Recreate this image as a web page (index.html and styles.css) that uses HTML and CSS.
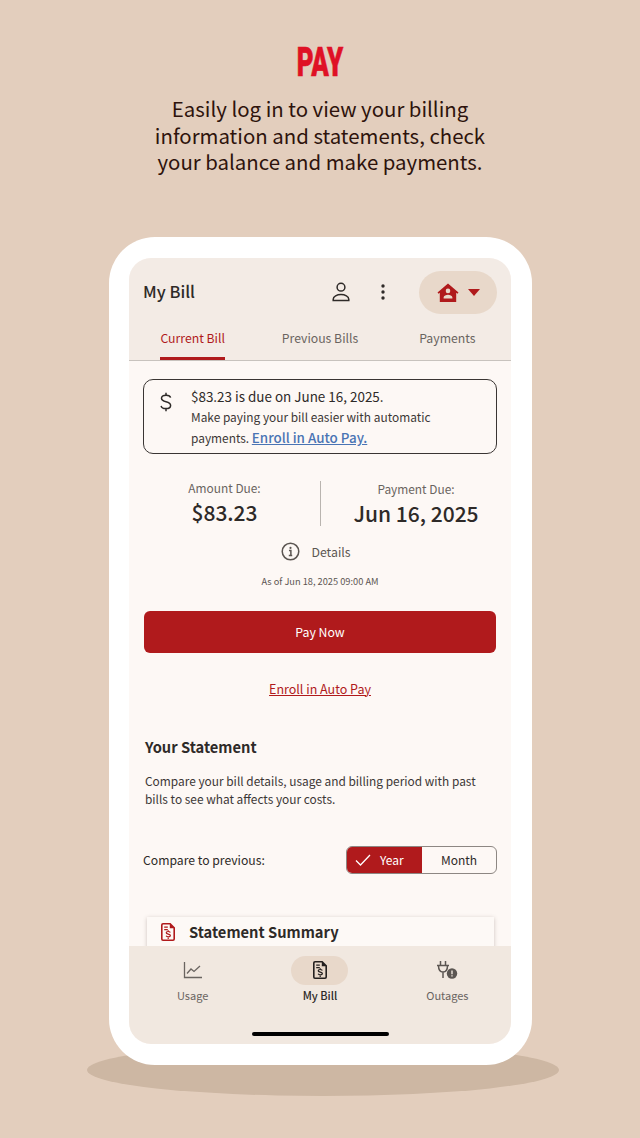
FILE: index.html
```html
<!DOCTYPE html>
<html lang="en">
<head>
    <meta charset="UTF-8">
    <meta name="viewport" content="width=device-width, initial-scale=1.0">
    <title>Pay</title>
    <link rel="stylesheet" href="styles.css">
</head>
<body>
    <div class="page">
        <h1 class="heading"><span>PAY</span></h1>
        <p class="intro">Easily log in to view your billing<br>information and statements, check<br>your balance and make payments.</p>

        <div class="phone-wrap">
            <div class="shadow"></div>
            <div class="phone">
                <div class="screen">
                    <div class="top">
                        <div class="topbar">
                            <div class="title">My Bill</div>
                            <svg class="ico-user" width="24" height="24" viewBox="0 0 24 24" fill="none" stroke="#2e2a28" stroke-width="1.5">
                                <circle cx="12" cy="7.2" r="3.9"/>
                                <path d="M4.2 20.6v-1.4c0-2.9 3.800-4.600 7.800-4.600s7.800 1.700 7.800 4.600v1.400z"/>
                            </svg>
                            <svg class="ico-more" width="6" height="18" viewBox="0 0 6 18" fill="#2e2a28">
                                <circle cx="3" cy="3" r="1.7"/>
                                <circle cx="3" cy="9" r="1.7"/>
                                <circle cx="3" cy="15" r="1.7"/>
                            </svg>
                            <div class="acct">
                                <svg width="22" height="20" viewBox="0 0 22 20">
                                    <path fill="#b01a1c" fill-rule="evenodd" d="M11 .5 21.5 9.6l-1 1.2-1.300-1V19H2.800V9.800l-1.300 1-1-1.200zM11 5.600a2.300 2.300 0 1 0 0 4.600 2.300 2.300 0 0 0 0-4.600zM6.600 15.600h8.800v-1.200c0-1.500-2.600-2.600-4.400-2.600s-4.400 1.100-4.400 2.600z"/>
                                </svg>
                                <span class="caret"></span>
                            </div>
                        </div>
                        <div class="tabs">
                            <div class="tab tab-on"><span>Current Bill</span></div>
                            <div class="tab"><span>Previous Bills</span></div>
                            <div class="tab"><span>Payments</span></div>
                        </div>
                    </div>

                    <div class="main">
                        <div class="notice">
                            <svg class="ico-dollar" width="12" height="20" viewBox="0 0 12 20" fill="none" stroke="#2e2a28" stroke-width="1.500">
                                <path d="M10.600 5.600C10.200 3.900 8.600 3.200 6.200 3.200 3.400 3.200 1.500 4.400 1.500 6.300c0 2.200 2 2.900 4.500 3.500 2.600.7 4.600 1.400 4.600 3.600 0 2-2 3.200-4.700 3.200-2.600 0-4.400-.9-4.800-2.800"/>
                                <path d="M6 .8v2.400M6 16.600V19.200"/>
                            </svg>
                            <div>
                                <div class="notice-head">$83.23 is due on June 16, 2025.</div>
                                <div class="notice-text">Make paying your bill easier with automatic<br>payments. <a class="notice-link">Enroll in Auto Pay.</a></div>
                            </div>
                        </div>

                        <div class="due">
                            <div class="due-col">
                                <div class="due-label">Amount Due:</div>
                                <div class="due-value">$83.23</div>
                            </div>
                            <div class="due-col due-right">
                                <div class="due-label">Payment Due:</div>
                                <div class="due-value">Jun 16, 2025</div>
                            </div>
                        </div>

                        <div class="details">
                            <svg width="19" height="19" viewBox="0 0 20 20" fill="none" stroke="#5c5652" stroke-width="1.6">
                                <circle cx="10" cy="10" r="8.700"/>
                                <circle cx="10" cy="6.200" r="1.100" fill="#5c5652" stroke="none"/>
                                <path d="M8.400 9h2v5M8.200 14.200h3.600"/>
                            </svg>
                            <span>Details</span>
                        </div>
                        <div class="asof">As of Jun 18, 2025 09:00 AM</div>

                        <div class="pay-btn">Pay Now</div>
                        <a class="auto-link">Enroll in Auto Pay</a>

                        <h2 class="st-title">Your Statement</h2>
                        <p class="st-text">Compare your bill details, usage and billing period with past<br>bills to see what affects your costs.</p>

                        <div class="compare">
                            <div class="compare-label">Compare to previous:</div>
                            <div class="toggle">
                                <div class="toggle-on">
                                    <svg width="16" height="12" viewBox="0 0 16 12" fill="none" stroke="#fff" stroke-width="1.300">
                                        <path d="M1 6.500 5.500 11 15 1"/>
                                    </svg>
                                    Year
                                </div>
                                <div class="toggle-off">Month</div>
                            </div>
                        </div>

                        <div class="card">
                            <svg class="card-ico" width="14" height="18" viewBox="0 0 14 18">
                                <path fill="#b01a1c" fill-rule="evenodd" d="M2 0h7.500L14 4.500V16a2 2 0 0 1-2 2H2a2 2 0 0 1-2-2V2a2 2 0 0 1 2-2zm0 1.600a.4.4 0 0 0-.4.4v14c0 .2.2.4.4.4h10a.4.4 0 0 0 .4-.4V5.200H8.800V1.600z"/>
                                <path fill="#b01a1c" d="M3.200 3.600h3.600v1.200H3.200zM3.200 6h3.600v1.200H3.200z"/>
                                <path fill="none" stroke="#b01a1c" stroke-width="1.200" d="M9.300 9.400c-.3-.6-1.100-.9-2.100-.9-1.200 0-2 .5-2 1.300 0 1.700 4.200.9 4.200 2.700 0 .8-.9 1.300-2.100 1.300-1.100 0-1.900-.4-2.200-1M7.200 7.300v1.200M7.200 14.800V16"/>
                            </svg>
                            <span>Statement Summary</span>
                        </div>
                    </div>

                    <div class="nav">
                        <div class="nav-items">
                            <div class="nav-item">
                                <div class="nav-ico">
                                    <svg width="20" height="18" viewBox="0 0 20 18" fill="none" stroke="#6a6460" stroke-width="1.300">
                                        <path d="M1.500 1v15.500H19"/>
                                        <path d="M4 12.500 8 8l3 2.500L17 5"/>
                                    </svg>
                                </div>
                                <div class="nav-label">Usage</div>
                            </div>
                            <div class="nav-item nav-on">
                                <div class="nav-ico nav-pill">
                                    <svg width="14" height="18" viewBox="0 0 14 18">
                                        <path fill="#24201f" fill-rule="evenodd" d="M2 0h7.500L14 4.500V16a2 2 0 0 1-2 2H2a2 2 0 0 1-2-2V2a2 2 0 0 1 2-2zm0 1.600a.4.4 0 0 0-.4.4v14c0 .2.2.4.4.4h10a.4.4 0 0 0 .4-.4V5.200H8.800V1.600z"/>
                                        <path fill="#24201f" d="M3.200 3.600h3.600v1.200H3.200zM3.200 6h3.600v1.200H3.200z"/>
                                        <path fill="none" stroke="#24201f" stroke-width="1.200" d="M9.300 9.400c-.3-.6-1.100-.9-2.100-.9-1.200 0-2 .5-2 1.300 0 1.700 4.200.9 4.200 2.700 0 .8-.9 1.300-2.100 1.300-1.100 0-1.900-.4-2.200-1M7.200 7.300v1.200M7.200 14.800V16"/>
                                    </svg>
                                </div>
                                <div class="nav-label">My Bill</div>
                            </div>
                            <div class="nav-item">
                                <div class="nav-ico">
                                    <svg width="22" height="20" viewBox="0 0 22 20">
                                        <path fill="none" stroke="#5c5652" stroke-width="1.500" d="M4.500 1v4M9.500 1v4M1 5.500h12M2.500 5.500c0 3.500 1.500 6.500 4.500 6.500s4.500-3 4.500-6.500M7 12v6"/>
                                        <circle cx="16" cy="13.500" r="5.200" fill="#5c5652"/>
                                        <path fill="#f1e8e0" d="M15.300 10.500h1.400v3.800h-1.400zM15.300 15.200h1.400v1.400h-1.400z"/>
                                    </svg>
                                </div>
                                <div class="nav-label">Outages</div>
                            </div>
                        </div>
                        <div class="home-bar"></div>
                    </div>
                </div>
            </div>
        </div>
    </div>
</body>
</html>
```

FILE: styles.css
```css
* {box-sizing: border-box;}
html, body {margin: 0; padding: 0;}
body {background: #e3cebd; font-family: "Noto Sans CJK SC", "Noto Sans", sans-serif; color: #2e2a28;}

.page {width: 640px; height: 1138px; overflow: hidden; padding-top: 45px;}
.heading {margin: 0; height: 34px; line-height: 34px; text-align: center; font-family: Roboto, "Liberation Sans", sans-serif; font-size: 41px; font-weight: 900; color: #df1125;}
.heading span {display: inline-block; transform: scaleX(.63); -webkit-text-stroke: .6px #df1125;}
.intro {margin: 16px 0 0; text-align: center; font-size: 20.400px; line-height: 26.500px; color: #2e130c;}

.phone-wrap {position: relative; width: 423px; height: 828px; margin: 62px 0 0 109px;}
.shadow {position: absolute; left: -22px; top: 807px; width: 472px; height: 52px; border-radius: 50%; background: #cdb7a3;}
.phone {position: relative; height: 828px; padding: 21px 21px 21px 20px; background: #fff; border-radius: 46px;}
.screen {height: 786px; display: flex; flex-direction: column; overflow: hidden; border-radius: 22px; background: #fdf8f5;}

.top {background: #f3ebe5; border-bottom: 1px solid #c8c3be;}
.topbar {height: 68px; display: flex; align-items: center; padding: 0 14px;}
.title {flex: 1; font-size: 16.500px; font-weight: 500; line-height: 24px; margin-top: -1px;}
.ico-user {margin-right: 27px; margin-top: 1px;}
.ico-more {margin-right: 33px; margin-top: 1px;}
.acct {width: 78px; height: 43px; margin-top: 2px; border-radius: 22px; background: #e8d8ca; display: flex; align-items: center; justify-content: center; gap: 9px;}
.caret {width: 0; height: 0; border-left: 6.500px solid transparent; border-right: 6.500px solid transparent; border-top: 7px solid #b01a1c;}

.tabs {height: 34px; display: flex; font-size: 12.250px; line-height: 24px; color: #6a6460;}
.tab {flex: 1; text-align: center;}
.tab span {display: inline-block; height: 34px;}
.tab-on {color: #b01a1c;}
.tab-on span {border-bottom: 3px solid #b01a1c;}

.main {flex: 1; min-height: 0; overflow: hidden; padding: 18px 14px 0;}

.notice {height: 75px; display: flex; border: 1px solid #3a3533; border-radius: 10px; padding: 6px 10px 0 16px;}
.ico-dollar {flex: none; margin: 6px 19px 0 0;}
.notice-head {font-size: 13.450px; line-height: 21px;}
.notice-text {font-size: 11.900px; line-height: 20.500px; color: #3c3735;}
.notice-link {font-size: 13.400px; font-weight: 500; color: #4a74b4; text-decoration: underline;}

.due {display: flex; margin-top: 27px; height: 45px;}
.due-col {width: 50%; text-align: center; padding-right: 14px; margin-top: -1px;}
.due-right {border-left: 1px solid #b9b4af; padding: 0 0 0 14px; margin-top: 0;}
.due-label {font-size: 11.900px; line-height: 15px; color: #6a6460;}
.due-value {font-size: 21px; line-height: 30px; font-weight: 500; margin-top: 2px;}

.details {display: flex; justify-content: center; align-items: center; gap: 11px; margin: 16px 8px 0 0; height: 20px; font-size: 12.300px; color: #5c5652;}
.asof {margin-top: 12px; text-align: center; font-size: 9.250px; line-height: 14px; color: #5c5652;}

.pay-btn {height: 42px; margin: 23px 1px 0; background: #b01a1c; border-radius: 6px; text-align: center; line-height: 42px; font-size: 12.300px; color: #fff;}
.auto-link {display: block; margin-top: 27px; text-align: center; font-size: 12.500px; line-height: 18px; color: #b01a1c; text-decoration: underline;}

.st-title {margin: 39px 0 0 2px; font-size: 14.700px; line-height: 20px; font-weight: 700;}
.st-text {margin: 15px 0 0 2px; font-size: 11.900px; line-height: 18px; color: #3c3735;}

.compare {display: flex; justify-content: space-between; align-items: center; margin-top: 38px; height: 28px;}
.compare-label {font-size: 12.200px; line-height: 18px;}
.toggle {width: 151px; height: 28px; display: flex; border: 1px solid #8d8783; border-radius: 6px; overflow: hidden; font-size: 12px; line-height: 26px;}
.toggle-on {width: 75px; background: #b01a1c; color: #fff; display: flex; align-items: center; gap: 9px; padding-left: 8px;}
.toggle-off {flex: 1; text-align: center;}

.card {margin: 43px 3px 0 4px; height: 60px; background: #fdf9f6; box-shadow: 0 1px 4px rgba(80, 60, 50, .28); display: flex; align-items: flex-start; padding: 5px 0 0 14px; gap: 14px; font-size: 14.700px; line-height: 20px; font-weight: 700;}
.card-ico {margin-top: 1px;}

.nav {flex: none; position: relative; height: 98px; background: #f1e8e0; padding-top: 10px;}
.nav-items {display: flex;}
.nav-item {flex: 1; text-align: center; font-size: 11px; line-height: 16px; color: #6a6460;}
.nav-ico {height: 29px; width: 57px; margin: 0 auto; display: flex; align-items: center; justify-content: center;}
.nav-pill {background: #e8d8ca; border-radius: 15px;}
.nav-on {color: #2e2a28; font-weight: 500;}
.nav-label {margin-top: 2px;}
.home-bar {position: absolute; left: 123px; bottom: 8px; width: 137px; height: 4px; border-radius: 2px; background: #000;}
```
